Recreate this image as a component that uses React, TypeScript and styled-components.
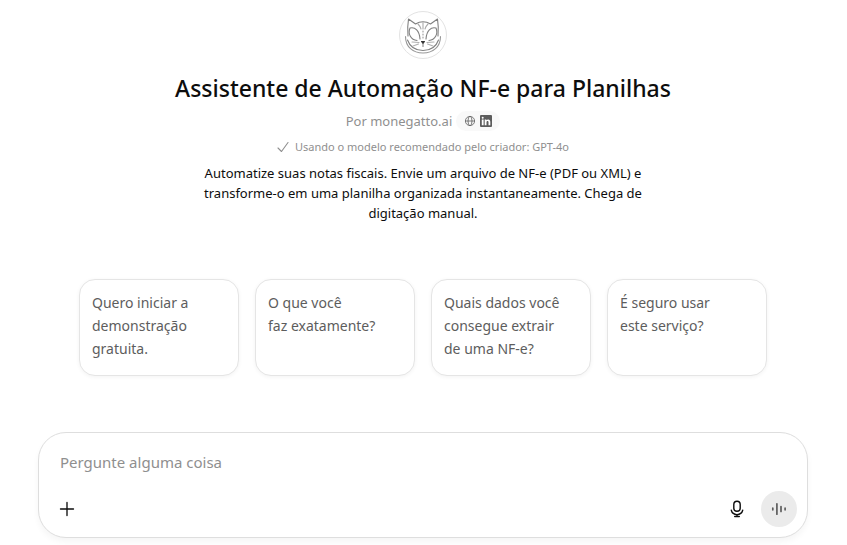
import React from "react";
import styled, { createGlobalStyle } from "styled-components";

const GlobalStyle = createGlobalStyle`
  *, *::before, *::after { box-sizing: border-box; }
  body {
    margin: 0;
    background: #fff;
    color: #0d0d0d;
    font-family: "Noto Sans", "Open Sans", sans-serif;
  }
  button, textarea { font: inherit; color: inherit; }
`;

const Page = styled.main`
  display: flex;
  flex-direction: column;
  align-items: center;
  min-height: 100vh;
  padding: 11px 33px 7px 32px;
`;

const Hero = styled.header`
  display: flex;
  flex-direction: column;
  align-items: center;
  text-align: center;
`;

const Avatar = styled.div`
  display: flex;
  width: 48px;
  height: 48px;
  border: 1px solid #e3e3e3;
  border-radius: 50%;
  overflow: hidden;
`;

const Title = styled.h1`
  margin: 13px 0 0;
  font-size: 23px;
  line-height: 32px;
  font-weight: 500;
`;

const Byline = styled.div`
  display: flex;
  align-items: center;
  gap: 4px;
  margin-top: 7px;
  color: #8f8f8f;
  font-size: 13px;
  line-height: 20px;
`;

const Links = styled.nav`
  display: flex;
  align-items: center;
  gap: 4px;
  height: 20px;
  padding: 0 8px;
  border-radius: 10px;
  background: #f9f9f9;
`;

const IconLink = styled.a`
  display: flex;
  color: #5d5d5d;
`;

const ModelNote = styled.p`
  display: flex;
  align-items: center;
  gap: 6px;
  margin: 8px 0 0;
  color: #8f8f8f;
  font-size: 11px;
  line-height: 16px;
`;

const Description = styled.p`
  max-width: 456px;
  margin: 8px 0 0;
  font-size: 13px;
  line-height: 20px;
`;

const Starters = styled.section`
  display: grid;
  grid-template-columns: repeat(4, 1fr);
  gap: 16px;
  width: 100%;
  max-width: 688px;
  margin-top: 56px;
`;

const Starter = styled.button`
  display: flex;
  min-height: 97px;
  padding: 11px 12px 12px;
  border: 1px solid #e5e5e5;
  border-radius: 16px;
  background: #fff;
  box-shadow: 0 1px 4px rgba(0, 0, 0, 0.05);
  color: #5d5d5d;
  font-size: 14px;
  line-height: 23px;
  text-align: left;
  text-wrap: balance;
  cursor: pointer;
`;

const Composer = styled.form`
  display: flex;
  flex-direction: column;
  justify-content: space-between;
  width: 100%;
  max-width: 770px;
  min-height: 106px;
  margin-top: auto;
  padding: 17px 10px 10px;
  border: 1px solid #dedede;
  border-radius: 28px;
  background: #fff;
  box-shadow: 0 4px 6px rgba(0, 0, 0, 0.04);
`;

const Prompt = styled.textarea`
  display: block;
  width: 100%;
  height: 24px;
  padding: 0 11px;
  border: 0;
  outline: 0;
  resize: none;
  overflow: hidden;
  background: transparent;
  font-size: 15px;
  line-height: 24px;
  &::placeholder { color: #8f8f8f; opacity: 1; }
`;

const Toolbar = styled.div`
  display: flex;
  align-items: center;
  justify-content: space-between;
`;

const Actions = styled.div`
  display: flex;
  gap: 6px;
`;

const RoundButton = styled.button<{ $filled?: boolean }>`
  display: flex;
  align-items: center;
  justify-content: center;
  width: 36px;
  height: 36px;
  padding: 0;
  border: 0;
  border-radius: 50%;
  background: ${(p) => (p.$filled ? "#ebebeb" : "transparent")};
  color: ${(p) => (p.$filled ? "#5d5d5d" : "#0d0d0d")};
  cursor: pointer;
`;

const CatLogo = () => (
  <svg width="46" height="46" viewBox="0 0 46 46" fill="none" stroke="#808080" strokeWidth="1.1" strokeLinecap="round" strokeLinejoin="round" role="img" aria-label="monegatto.ai">
    <path d="M8 24C7.500 18 7.500 13 8.500 7L15.500 12Q23 7.500 30.500 12L37.500 7C38.500 13 38.500 18 38 24" />
    <path d="M7.500 28C10 35 16 38.500 23 38.500S36 35 38.500 28" />
    <path d="M5.500 24.500C5.500 35 13 41 23 41S40.500 35 40.500 24.500" stroke="#999" />
    <path d="M17 28.500C11 28 7.500 22 10 16C15 14.500 19.500 19 20 27" />
    <path d="M29 28.500C35 28 38.500 22 36 16C31 14.500 26.500 19 26 27" />
    <path d="M18 12C19.500 13.500 20.500 15 21 17M28 12C26.500 13.500 25.500 15 25 17M23 10.500V17" stroke="#aaa" />
    <path d="M23 19V28" stroke="#999" strokeDasharray="1 2" />
    <path d="M19 30.500L12 30M18.500 32L13 34M27 30.500L34 30M27.500 32L33 34" stroke="#b0b0b0" />
    <path d="M21.500 29.500H24.500L23 31.500Z" fill="#333" stroke="#333" />
    <path d="M23 32V34.500" stroke="#888" />
  </svg>
);

const GlobeIcon = () => (
  <svg width="12" height="12" viewBox="0 0 12 12" fill="none" stroke="currentColor" strokeWidth="0.8">
    <circle cx="6" cy="6" r="4.600" />
    <ellipse cx="6" cy="6" rx="2" ry="4.600" />
    <path d="M1.400 6H10.600" />
  </svg>
);

const LinkedInIcon = () => (
  <svg width="12" height="12" viewBox="0 0 12 12">
    <rect width="12" height="12" rx="1" fill="currentColor" />
    <g fill="#fff">
      <circle cx="2.700" cy="2.700" r="1" />
      <path d="M1.800 4.500H3.600V10.200H1.800ZM4.700 4.500H6.400V5.300C6.800 4.700 7.400 4.400 8.200 4.400C9.700 4.400 10.300 5.400 10.300 7V10.200H8.500V7.300C8.500 6.500 8.300 5.900 7.600 5.900C6.800 5.900 6.500 6.500 6.500 7.300V10.200H4.700Z" />
    </g>
  </svg>
);

const CheckIcon = () => (
  <svg width="12" height="12" viewBox="0 0 12 12" fill="none" stroke="currentColor" strokeWidth="1.100" strokeLinecap="round" strokeLinejoin="round" aria-hidden="true">
    <path d="M1 7L4.500 10.500L11 1.500" />
  </svg>
);

const PlusIcon = () => (
  <svg width="20" height="20" viewBox="0 0 20 20" fill="none" stroke="currentColor" strokeWidth="1.330" strokeLinecap="round">
    <path d="M10 3.500V16.500M3.500 10H16.500" />
  </svg>
);

const MicIcon = () => (
  <svg width="20" height="20" viewBox="0 0 20 20" fill="none" stroke="currentColor" strokeWidth="1.400" strokeLinecap="round" strokeLinejoin="round">
    <rect x="6.800" y="2.300" width="6.400" height="10" rx="3.200" />
    <path d="M4.300 11.300C5 14 7.300 15.600 10 15.600S15 14 15.700 11.300M10 15.600V17.500M7.700 17.500H12.300" />
  </svg>
);

const VoiceIcon = () => (
  <svg width="20" height="20" viewBox="0 0 20 20" fill="none" stroke="currentColor" strokeWidth="1.700" strokeLinecap="round">
    <path d="M3.800 9.200V10.800M7.900 4.800V15.200M12 7.500V12.500M16.100 9.200V10.800" />
  </svg>
);

const starters = [
  "Quero iniciar a demonstração gratuita.",
  "O que você faz exatamente?",
  "Quais dados você consegue extrair de uma NF-e?",
  "É seguro usar este serviço?",
];

export default function App() {
  return (
    <>
      <GlobalStyle />
      <Page>
        <Hero>
          <Avatar><CatLogo /></Avatar>
          <Title>Assistente de Automação NF-e para Planilhas</Title>
          <Byline>
            <span>Por monegatto.ai</span>
            <Links aria-label="Links do criador">
              <IconLink href="#site" aria-label="Site"><GlobeIcon /></IconLink>
              <IconLink href="#linkedin" aria-label="LinkedIn"><LinkedInIcon /></IconLink>
            </Links>
          </Byline>
          <ModelNote>
            <CheckIcon />
            Usando o modelo recomendado pelo criador: GPT-4o
          </ModelNote>
          <Description>
            Automatize suas notas fiscais. Envie um arquivo de NF-e (PDF ou XML) e
            transforme-o em uma planilha organizada instantaneamente. Chega de
            digitação manual.
          </Description>
        </Hero>
        <Starters aria-label="Sugestões">
          {starters.map((text) => (
            <Starter key={text} type="button">{text}</Starter>
          ))}
        </Starters>
        <Composer onSubmit={(e) => e.preventDefault()}>
          <Prompt rows={1} aria-label="Mensagem" placeholder="Pergunte alguma coisa" />
          <Toolbar>
            <RoundButton type="button" aria-label="Adicionar"><PlusIcon /></RoundButton>
            <Actions>
              <RoundButton type="button" aria-label="Ditar"><MicIcon /></RoundButton>
              <RoundButton type="button" $filled aria-label="Modo de voz"><VoiceIcon /></RoundButton>
            </Actions>
          </Toolbar>
        </Composer>
      </Page>
    </>
  );
}
